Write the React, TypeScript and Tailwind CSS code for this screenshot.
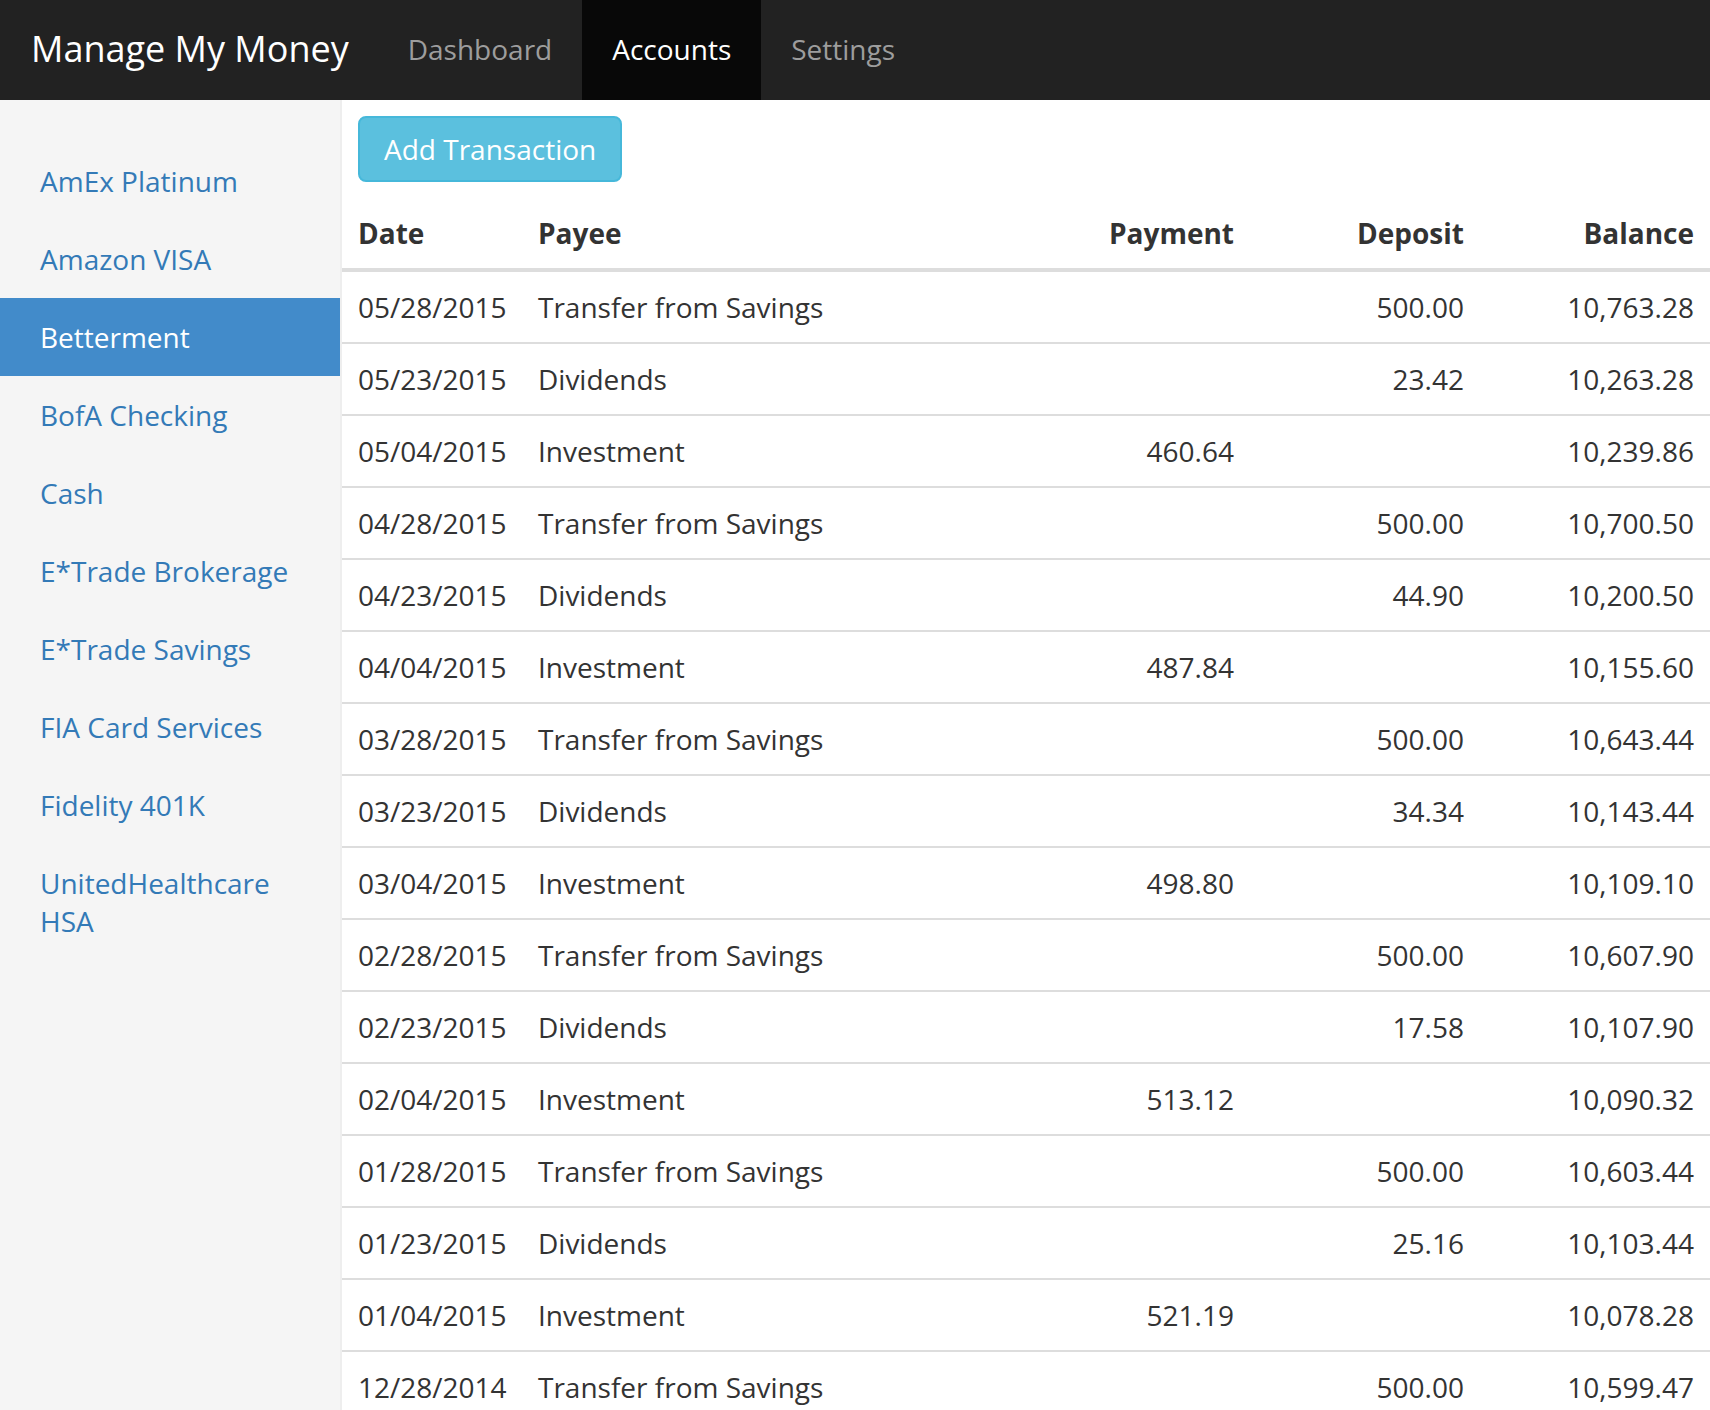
import React from "react";

const accounts = [
  "AmEx Platinum",
  "Amazon VISA",
  "Betterment",
  "BofA Checking",
  "Cash",
  "E*Trade Brokerage",
  "E*Trade Savings",
  "FIA Card Services",
  "Fidelity 401K",
  "UnitedHealthcare HSA",
];

type Row = { date: string; payee: string; payment: string; deposit: string; balance: string };

const rows: Row[] = [
  { date: "05/28/2015", payee: "Transfer from Savings", payment: "", deposit: "500.00", balance: "10,763.28" },
  { date: "05/23/2015", payee: "Dividends", payment: "", deposit: "23.42", balance: "10,263.28" },
  { date: "05/04/2015", payee: "Investment", payment: "460.64", deposit: "", balance: "10,239.86" },
  { date: "04/28/2015", payee: "Transfer from Savings", payment: "", deposit: "500.00", balance: "10,700.50" },
  { date: "04/23/2015", payee: "Dividends", payment: "", deposit: "44.90", balance: "10,200.50" },
  { date: "04/04/2015", payee: "Investment", payment: "487.84", deposit: "", balance: "10,155.60" },
  { date: "03/28/2015", payee: "Transfer from Savings", payment: "", deposit: "500.00", balance: "10,643.44" },
  { date: "03/23/2015", payee: "Dividends", payment: "", deposit: "34.34", balance: "10,143.44" },
  { date: "03/04/2015", payee: "Investment", payment: "498.80", deposit: "", balance: "10,109.10" },
  { date: "02/28/2015", payee: "Transfer from Savings", payment: "", deposit: "500.00", balance: "10,607.90" },
  { date: "02/23/2015", payee: "Dividends", payment: "", deposit: "17.58", balance: "10,107.90" },
  { date: "02/04/2015", payee: "Investment", payment: "513.12", deposit: "", balance: "10,090.32" },
  { date: "01/28/2015", payee: "Transfer from Savings", payment: "", deposit: "500.00", balance: "10,603.44" },
  { date: "01/23/2015", payee: "Dividends", payment: "", deposit: "25.16", balance: "10,103.44" },
  { date: "01/04/2015", payee: "Investment", payment: "521.19", deposit: "", balance: "10,078.28" },
  { date: "12/28/2014", payee: "Transfer from Savings", payment: "", deposit: "500.00", balance: "10,599.47" },
];

export default function App() {
  return (
    <div
      className="h-[1410px] overflow-hidden flex flex-col bg-white text-[#333]"
      style={{ fontFamily: '"Open Sans", "Noto Sans", sans-serif' }}
    >
      <nav className="h-[100px] shrink-0 bg-[#222] flex items-stretch">
        <div className="pl-[31px] pr-[29px] pb-[2px] flex items-center text-[36px] text-white">Manage My Money</div>
        <a className="px-[30px] pb-[2px] flex items-center text-[28px] text-[#9d9d9d]">Dashboard</a>
        <a className="px-[30px] pb-[2px] flex items-center text-[28px] text-white bg-[#080808]">Accounts</a>
        <a className="px-[30px] pb-[2px] flex items-center text-[28px] text-[#9d9d9d]">Settings</a>
      </nav>
      <div className="flex flex-1 min-h-0">
        <aside className="w-[342px] shrink-0 bg-[#f5f5f5] border-r-2 border-[#eee] pt-[42px]">
          <ul>
            {accounts.map((a) => (
              <li key={a}>
                <a
                  className={
                    "block px-[40px] py-[20px] text-[28px] leading-[38px] " +
                    (a === "Betterment" ? "bg-[#428bca] text-white" : "text-[#337ab7]")
                  }
                >
                  {a}
                </a>
              </li>
            ))}
          </ul>
        </aside>
        <main className="flex-1 min-w-0 pt-[16px]">
          <div className="pl-[16px]">
            <button className="rounded-[8px] border-2 border-[#46b8da] bg-[#5bc0de] px-[24px] py-[11px] text-[28px] leading-[40px] text-white">
              Add Transaction
            </button>
          </div>
          <table className="mt-[16px] w-full table-fixed border-collapse text-[28px] leading-[38px]">
            <colgroup>
              <col className="w-[180px]" />
              <col />
              <col className="w-[230px]" />
              <col className="w-[230px]" />
              <col className="w-[230px]" />
            </colgroup>
            <thead>
              <tr className="border-b-4 border-[#ddd]">
                <th className="px-[16px] py-[16px] text-left font-bold">Date</th>
                <th className="px-[16px] py-[16px] text-left font-bold">Payee</th>
                <th className="px-[16px] py-[16px] text-right font-bold">Payment</th>
                <th className="px-[16px] py-[16px] text-right font-bold">Deposit</th>
                <th className="px-[16px] py-[16px] text-right font-bold">Balance</th>
              </tr>
            </thead>
            <tbody>
              {rows.map((r) => (
                <tr key={r.date} className="border-b-2 border-[#ddd]">
                  <td className="px-[16px] py-[16px] whitespace-nowrap">{r.date}</td>
                  <td className="px-[16px] py-[16px] whitespace-nowrap">{r.payee}</td>
                  <td className="px-[16px] py-[16px] text-right">{r.payment}</td>
                  <td className="px-[16px] py-[16px] text-right">{r.deposit}</td>
                  <td className="px-[16px] py-[16px] text-right">{r.balance}</td>
                </tr>
              ))}
            </tbody>
          </table>
        </main>
      </div>
    </div>
  );
}
